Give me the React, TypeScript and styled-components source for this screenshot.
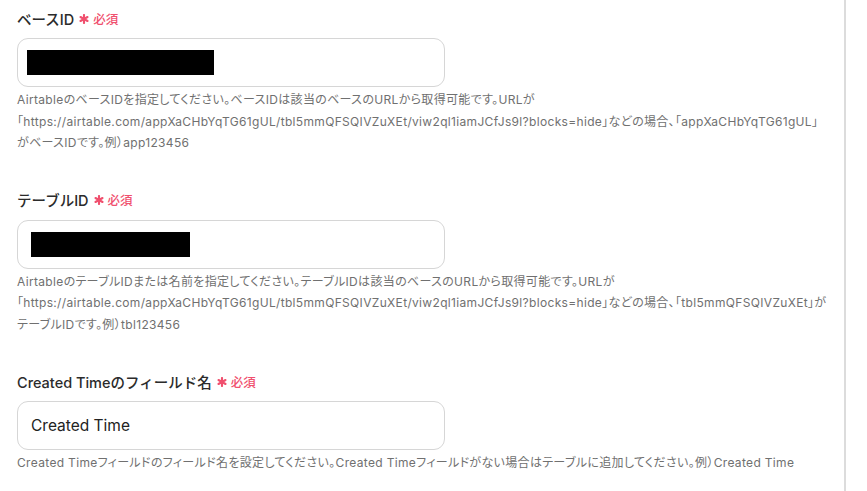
import React from "react";
import styled, { createGlobalStyle } from "styled-components";

const Global = createGlobalStyle`
  html, body { margin: 0; padding: 0; background: #fff; }
  body { font-family: Inter, "Noto Sans CJK JP", sans-serif; }
`;

const Page = styled.div`
  width: 867px;
  height: 491px;
  overflow: hidden;
  display: flex;
  background: #fff;
`;

const Panel = styled.div`
  width: 846px;
  border-right: 2px solid #dcdcdc;
  padding: 8px 0 0 17px;
  box-sizing: border-box;
  display: flex;
  flex-direction: column;
  gap: 36px;
`;

const Field = styled.section`
  display: flex;
  flex-direction: column;
`;

const Label = styled.div`
  display: flex;
  align-items: center;
  height: 20px;
  font-size: 14.5px;
  font-weight: 500;
  color: #2b2b2b;
`;

const Star = styled.svg`
  width: 10px;
  height: 10px;
  margin: 1px 4px 0 5px;
`;

const Required = styled.span`
  color: #f0506e;
  font-size: 12.5px;
  font-weight: 500;
`;

const InputBox = styled.div<{ $pad: number }>`
  margin-top: 10px;
  width: 428px;
  height: 49px;
  box-sizing: border-box;
  border: 1px solid #d6d6d6;
  border-radius: 11px;
  display: flex;
  align-items: center;
  padding-left: ${(p) => p.$pad}px;
  font-size: 15.5px;
  color: #222;
`;

const Redacted = styled.div<{ $w: number }>`
  width: ${(p) => p.$w}px;
  height: 25px;
  background: #000;
`;

const Help = styled.p`
  margin: 2px 0 0;
  font-size: 12px;
  line-height: 21.5px;
  color: #707070;
  letter-spacing: 0.33px;
  white-space: nowrap;
  font-feature-settings: "palt";
`;

const Asterisk = () => (
  <Star viewBox="0 0 10 10">
    <g stroke="#f0506e" strokeWidth="2.1" strokeLinecap="round">
      <line x1="5" y1="1" x2="5" y2="9" />
      <line x1="1.5" y1="3" x2="8.5" y2="7" />
      <line x1="1.5" y1="7" x2="8.5" y2="3" />
    </g>
  </Star>
);

const FieldLabel = ({ text }: { text: string }) => (
  <Label>
    {text}
    <Asterisk />
    <Required>必須</Required>
  </Label>
);

export default function App() {
  return (
    <Page>
      <Global />
      <Panel>
        <Field>
          <FieldLabel text="ベースID" />
          <InputBox $pad={9}>
            <Redacted $w={187} />
          </InputBox>
          <Help>
            AirtableのベースIDを指定してください。ベースIDは該当のベースのURLから取得可能です。URLが
            <br />
            「https://airtable.com/appXaCHbYqTG61gUL/tbl5mmQFSQIVZuXEt/viw2ql1iamJCfJs9l?blocks=hide」などの場合、「appXaCHbYqTG61gUL」
            <br />
            がベースIDです。例）app123456
          </Help>
        </Field>
        <Field>
          <FieldLabel text="テーブルID" />
          <InputBox $pad={13}>
            <Redacted $w={159} />
          </InputBox>
          <Help>
            AirtableのテーブルIDまたは名前を指定してください。テーブルIDは該当のベースのURLから取得可能です。URLが
            <br />
            「https://airtable.com/appXaCHbYqTG61gUL/tbl5mmQFSQIVZuXEt/viw2ql1iamJCfJs9l?blocks=hide」などの場合、「tbl5mmQFSQIVZuXEt」が
            <br />
            テーブルIDです。例）tbl123456
          </Help>
        </Field>
        <Field>
          <FieldLabel text="Created Timeのフィールド名" />
          <InputBox $pad={13}>Created Time</InputBox>
          <Help>
            Created Timeフィールドのフィールド名を設定してください。Created Timeフィールドがない場合はテーブルに追加してください。例）Created Time
          </Help>
        </Field>
      </Panel>
    </Page>
  );
}
